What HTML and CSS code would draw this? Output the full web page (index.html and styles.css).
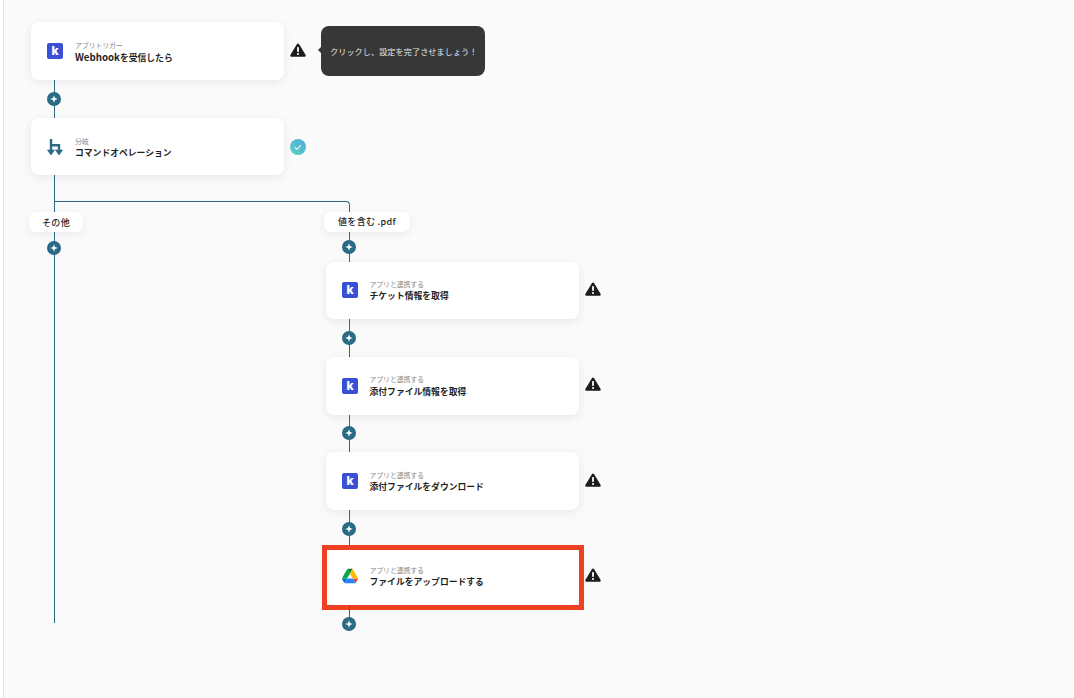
FILE: index.html
```html
<!DOCTYPE html>
<html lang="ja">
<head>
<meta charset="utf-8">
<title>フロー</title>
<link rel="stylesheet" href="styles.css">
</head>
<body>
<svg class="defs" width="0" height="0" aria-hidden="true">
  <symbol id="warn" viewBox="0 0 16 14">
    <path d="M8 .6c.5 0 1 .3 1.300.8l6.200 10.300c.6 1-.1 2.100-1.200 2.100H1.700C.6 13.800-.1 12.700.5 11.700L6.700 1.400C7 .9 7.500.6 8 .6z" fill="#1c1c1c"/>
    <rect x="7.100" y="4" width="1.800" height="5" rx=".7" fill="#fff"/>
    <circle cx="8" cy="11" r="1.050" fill="#fff"/>
  </symbol>
  <symbol id="spark" viewBox="0 0 14 14">
    <circle cx="7" cy="7" r="7" fill="#2a6a85"/>
    <path d="M7 3.200l1 2.800 2.800 1-2.800 1-1 2.800-1-2.800-2.800-1 2.800-1z" fill="#fff"/>
  </symbol>
</svg>
<main class="canvas">
  <div class="row">
    <div class="card">
      <span class="klogo">k</span>
      <div class="text"><p class="sub">アプリトリガー</p><p class="title"><span class="latin">Webhook</span>を受信したら</p></div>
    </div>
    <svg class="warn"><use href="#warn"/></svg>
    <div class="tip">クリックし、設定を完了させましょう！</div>
  </div>
  <div class="link"><svg class="node"><use href="#spark"/></svg></div>
  <div class="row">
    <div class="card card-short">
      <svg class="logo" viewBox="0 0 16 16" fill="none">
        <path d="M4 0v12M4 6.200h8v5.800" stroke="#2a6a85" stroke-width="2.400"/>
        <path d="M.4 11h7.200L4 16zM8.400 11h7.200L12 16z" fill="#2a6a85" stroke="#2a6a85" stroke-width=".6" stroke-linejoin="round"/>
      </svg>
      <div class="text"><p class="sub">分岐</p><p class="title">コマンドオペレーション</p></div>
    </div>
    <span class="ok">
      <svg viewBox="0 0 16 16" fill="none"><path d="M5 8.300l2.100 2L11 6" stroke="#fff" stroke-width="1.100"/></svg>
    </span>
  </div>
  <div class="branches">
    <div class="elbow"></div>
    <section class="branch branch-other">
      <div class="stem"></div>
      <div class="chip chip-other">その他</div>
      <div class="link link-chip"><svg class="node"><use href="#spark"/></svg></div>
      <div class="tail"></div>
    </section>
    <section class="branch branch-match">
      <div class="chip chip-match">値を含む .pdf</div>
      <div class="link link-chip"><svg class="node"><use href="#spark"/></svg></div>
      <div class="row">
        <div class="card card-step">
          <span class="klogo">k</span>
          <div class="text"><p class="sub">アプリと連携する</p><p class="title">チケット情報を取得</p></div>
        </div>
        <svg class="warn"><use href="#warn"/></svg>
      </div>
      <div class="link link-step"><svg class="node"><use href="#spark"/></svg></div>
      <div class="row">
        <div class="card card-step">
          <span class="klogo">k</span>
          <div class="text"><p class="sub">アプリと連携する</p><p class="title">添付ファイル情報を取得</p></div>
        </div>
        <svg class="warn"><use href="#warn"/></svg>
      </div>
      <div class="link link-step"><svg class="node"><use href="#spark"/></svg></div>
      <div class="row">
        <div class="card card-step">
          <span class="klogo">k</span>
          <div class="text"><p class="sub">アプリと連携する</p><p class="title">添付ファイルをダウンロード</p></div>
        </div>
        <svg class="warn"><use href="#warn"/></svg>
      </div>
      <div class="link link-step"><svg class="node"><use href="#spark"/></svg></div>
      <div class="row">
        <div class="card card-step card-marked">
          <svg class="logo" viewBox="0 0 87.300 78">
            <path d="m6.600 66.850 3.850 6.650c.8 1.400 1.950 2.500 3.300 3.300l13.750-23.800h-27.500c0 1.550.4 3.100 1.200 4.500z" fill="#0066da"/>
            <path d="m43.650 25-13.750-23.800c-1.350.8-2.500 1.900-3.300 3.300l-25.400 44a9.060 9.060 0 0 0 -1.200 4.500h27.500z" fill="#00ac47"/>
            <path d="m73.550 76.800c1.350-.8 2.500-1.900 3.300-3.300l1.600-2.750 7.650-13.250c.8-1.400 1.200-2.950 1.200-4.500h-27.502l5.852 11.500z" fill="#ea4335"/>
            <path d="m43.650 25 13.750-23.800c-1.350-.8-2.900-1.200-4.500-1.200h-18.500c-1.600 0-3.150.45-4.500 1.200z" fill="#00832d"/>
            <path d="m59.800 53h-32.300l-13.750 23.800c1.350.8 2.900 1.200 4.500 1.200h50.800c1.600 0 3.150-.45 4.500-1.200z" fill="#2684fc"/>
            <path d="m73.400 26.500-12.700-22c-.8-1.400-1.950-2.500-3.300-3.300l-13.750 23.800 16.150 28h27.450c0-1.550-.4-3.100-1.200-4.500z" fill="#ffba00"/>
          </svg>
          <div class="text"><p class="sub">アプリと連携する</p><p class="title">ファイルをアップロードする</p></div>
        </div>
        <svg class="warn"><use href="#warn"/></svg>
      </div>
      <div class="link link-step link-end"><svg class="node"><use href="#spark"/></svg></div>
    </section>
  </div>
</main>
</body>
</html>
```

FILE: styles.css
```css
* { box-sizing: border-box; }
html, body { margin: 0; height: 100%; background: #fff; overflow: hidden; }
body { font-family: "Noto Sans CJK JP", "Noto Sans", sans-serif; color: #1f1f1f; }
p { margin: 0; }
.defs { position: absolute; }

.canvas {
  margin-left: 3px;
  height: 698px;
  padding: 22px 0 0 27px;
  border-left: 1px solid #e3e3e3;
  background: #fafafa;
}

.row { display: flex; align-items: center; gap: 6px; }

.card {
  position: relative;
  display: flex;
  align-items: center;
  gap: 12px;
  flex: none;
  width: 253px;
  height: 58px;
  padding-left: 16px;
  background: #fff;
  border-radius: 8px;
  box-shadow: 0 2px 10px rgba(0, 0, 0, .08);
}
.card-short { height: 57px; }
.card-step { height: 57.500px; }
.card-step .text { margin-left: -.5px; }
.card-step .title { margin-top: .5px; }
.card-step .sub { margin-top: -.5px; }
.card-step + .warn { margin-top: -3px; }
.card-marked::after {
  content: "";
  position: absolute;
  inset: -3px -5px -5px -4px;
  border: 5px solid #ee4023;
  pointer-events: none;
}

.klogo {
  display: flex;
  align-items: center;
  justify-content: center;
  flex: none;
  width: 16px;
  height: 16px;
  border-radius: 2px;
  background: #3a4fd6;
  color: #fff;
  font: 800 12px/16px Inter, sans-serif;
}
.logo { flex: none; width: 16px; height: 16px; }

.text { display: flex; flex-direction: column; }
.sub { font-size: 7px; line-height: 12px; color: #8a8a8a; letter-spacing: -.2px; }
.title { font-size: 8.800px; line-height: 12px; font-weight: 700; letter-spacing: 0; }
.latin { font-size: 9.700px; }

.warn { flex: none; width: 16px; height: 14px; margin-top: -2px; }
.ok {
  flex: none;
  width: 16px;
  height: 16px;
  margin-top: 1px;
  border-radius: 50%;
  background: linear-gradient(225deg, #4ba8e0, #5fd4bd);
}
.ok svg { display: block; }

.tip {
  position: relative;
  flex: none;
  display: flex;
  align-items: center;
  width: 164px;
  height: 50px;
  margin-left: 9px;
  padding-left: 9px;
  border-radius: 8px;
  background: #373737;
  color: #e8e8e8;
  font-size: 8.100px;
  letter-spacing: .1px;
  white-space: nowrap;
}
.tip::before {
  content: "";
  position: absolute;
  left: -3px;
  top: 21px;
  border-style: solid;
  border-width: 3px 3px 3px 0;
  border-color: transparent #373737 transparent transparent;
}

.link {
  position: relative;
  display: flex;
  align-items: center;
  width: 14px;
  height: 38px;
  margin-left: 16px;
}
.link::before, .stem::before, .tail::before {
  content: "";
  position: absolute;
  top: 0;
  bottom: 0;
  left: 7px;
  width: 1px;
  background: #2a6a85;
}
.node { position: relative; display: block; width: 14px; height: 14px; }
.link-chip { height: 30px; }
.branch-other .link-chip { height: 31px; }
.link-step { height: 37.830px; }
.link-end::before { bottom: 50%; }

.branches { position: relative; display: flex; }
.elbow {
  position: absolute;
  left: 23px;
  top: 26px;
  width: 296px;
  height: 12px;
  border-top: 1px solid #2a6a85;
  border-right: 1px solid #2a6a85;
  border-top-right-radius: 4px;
}
.branch { position: relative; flex: none; width: 295px; }
.branch-match { padding-top: 36.700px; }
.stem { position: relative; width: 14px; height: 37px; margin-left: 16px; }
.tail { position: relative; width: 14px; height: 360px; margin-left: 16px; }

.chip {
  position: relative;
  display: flex;
  align-items: center;
  justify-content: center;
  height: 20px;
  margin-left: -2px;
  border-radius: 7px;
  background: #fff;
  box-shadow: 0 2px 8px rgba(0, 0, 0, .07);
  font-size: 9px;
  font-weight: 500;
  letter-spacing: .3px;
}
.chip-other { width: 54px; }
.chip-match { width: 86px; }
```
